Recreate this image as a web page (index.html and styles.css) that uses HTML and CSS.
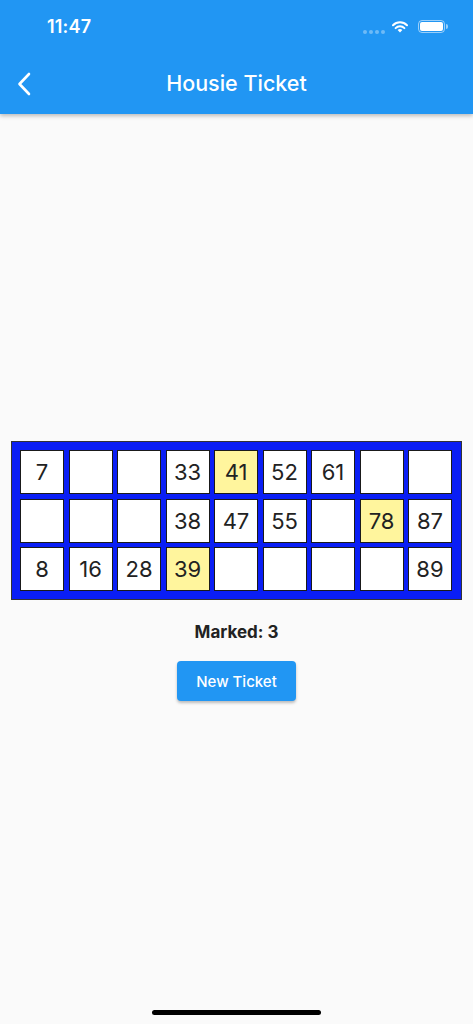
FILE: index.html
```html
<!DOCTYPE html>
<html lang="en">

	<head>
		<meta charset="UTF-8">
		<meta name="viewport" content="width=device-width, initial-scale=1.0">
		<title>Housie Ticket</title>
		<link rel="stylesheet" href="styles.css">
	</head>

	<body>
		<div class="app-bar">
			<div class="status-bar">
				<span class="time">11:47</span>
				<div class="status-icons">
					<span class="signal"><i></i><i></i><i></i><i></i></span>
					<svg class="wifi" width="16" height="13" viewBox="0 0 16 13">
						<path d="M8 12.6 L5.6 10.1 A3.4 3.4 0 0 1 10.4 10.1 Z" fill="#fff"/>
						<path d="M3.6 8.1 A6.2 6.2 0 0 1 12.4 8.1" stroke="#fff" stroke-width="2" fill="none" stroke-linecap="round"/>
						<path d="M1 5.2 A10 10 0 0 1 15 5.2" stroke="#fff" stroke-width="2" fill="none" stroke-linecap="round"/>
					</svg>
					<span class="battery"><span class="battery-level"></span></span>
				</div>
			</div>
			<div class="nav-bar">
				<a href="javascript:;" class="back">
					<svg width="14" height="24" viewBox="0 0 14 24">
						<path d="M12 2 L2.5 12 L12 22" stroke="#fff" stroke-width="2.6" fill="none" stroke-linecap="round" stroke-linejoin="round"/>
					</svg>
				</a>
				<div class="title">Housie Ticket</div>
			</div>
		</div>

		<div class="content">
			<div class="ticket">
				<div class="ticket-grid">
					<span>7</span><span></span><span></span><span>33</span><span class="marked">41</span><span>52</span><span>61</span><span></span><span></span>
					<span></span><span></span><span></span><span>38</span><span>47</span><span>55</span><span></span><span class="marked">78</span><span>87</span>
					<span>8</span><span>16</span><span>28</span><span class="marked">39</span><span></span><span></span><span></span><span></span><span>89</span>
				</div>
			</div>
			<div class="marked-count">Marked: 3</div>
			<a href="javascript:;" class="new-ticket">New Ticket</a>
		</div>

		<div class="home-indicator"></div>
	</body>

</html>
```

FILE: styles.css
```css
body {
	margin: 0;
	width: 473px;
	height: 1024px;
	overflow: hidden;
	background: #fafafa;
	font-family: Inter, "Noto Sans", sans-serif;
	position: relative;
}

a {
	text-decoration: none;
	color: #fff;
}

.app-bar {
	height: 114px;
	background: #2196f3;
	box-shadow: 0 2px 4px rgba(0, 0, 0, 0.25);
	color: #fff;
	position: relative;
	z-index: 1;
}

.status-bar {
	height: 54px;
	display: flex;
	justify-content: space-between;
	align-items: center;
	padding: 0 28px 0 47px;
	box-sizing: border-box;
	padding-bottom: 2px;
}

.time {
	font-size: 18px;
	font-weight: 600;
	letter-spacing: 0.2px;
}

.status-icons {
	display: flex;
	align-items: center;
	gap: 6px;
	padding-top: 1px;
}

.signal {
	display: flex;
	gap: 2px;
	margin-top: 11px;
	margin-right: 1px;
}

.signal i {
	width: 4px;
	height: 4px;
	border-radius: 50%;
	background: rgba(255, 255, 255, 0.35);
}

.battery {
	width: 27px;
	height: 13px;
	border: 1px solid rgba(255, 255, 255, 0.55);
	border-radius: 4px;
	padding: 1px;
	box-sizing: border-box;
	position: relative;
	margin-left: 4px;
}

.battery::after {
	content: "";
	position: absolute;
	right: -4px;
	top: 3px;
	width: 2px;
	height: 5px;
	border-radius: 0 2px 2px 0;
	background: rgba(255, 255, 255, 0.55);
}

.battery-level {
	display: block;
	height: 100%;
	background: #fff;
	border-radius: 2px;
}

.nav-bar {
	height: 60px;
	display: flex;
	align-items: center;
	justify-content: center;
	position: relative;
}

.back {
	position: absolute;
	left: 17px;
	top: 18px;
	display: flex;
}

.title {
	font-size: 21.5px;
	font-weight: 500;
	margin-top: -2px;
}

.content {
	height: 910px;
	display: flex;
	flex-direction: column;
	align-items: center;
	justify-content: center;
	padding-top: 4px;
	box-sizing: border-box;
}

.ticket {
	width: 451px;
	box-sizing: border-box;
	border: 1px solid #333;
	background: #0a1ef5;
	padding: 8px 9px 8px 8px;
}

.ticket-grid {
	display: grid;
	grid-template-columns: repeat(9, 44px);
	grid-auto-rows: 44px;
	gap: 4.5px;
}

.ticket-grid span {
	background: #fff;
	border: 1.5px solid #1a1a1a;
	box-sizing: border-box;
	display: flex;
	align-items: center;
	justify-content: center;
	font-size: 22px;
	color: #222;
}

.ticket-grid span.marked {
	background: #fff59d;
}

.marked-count {
	margin-top: 20px;
	font-size: 17px;
	font-weight: 700;
	line-height: 24px;
	color: #222;
}

.new-ticket {
	margin-top: 17px;
	width: 119px;
	height: 40px;
	display: flex;
	align-items: center;
	justify-content: center;
	background: #2196f3;
	border-radius: 4px;
	font-size: 15px;
	font-weight: 500;
	box-shadow: 0 2px 3px rgba(0, 0, 0, 0.25);
}

.home-indicator {
	position: absolute;
	left: 152px;
	bottom: 9px;
	width: 169px;
	height: 5px;
	border-radius: 3px;
	background: #000;
}
```
